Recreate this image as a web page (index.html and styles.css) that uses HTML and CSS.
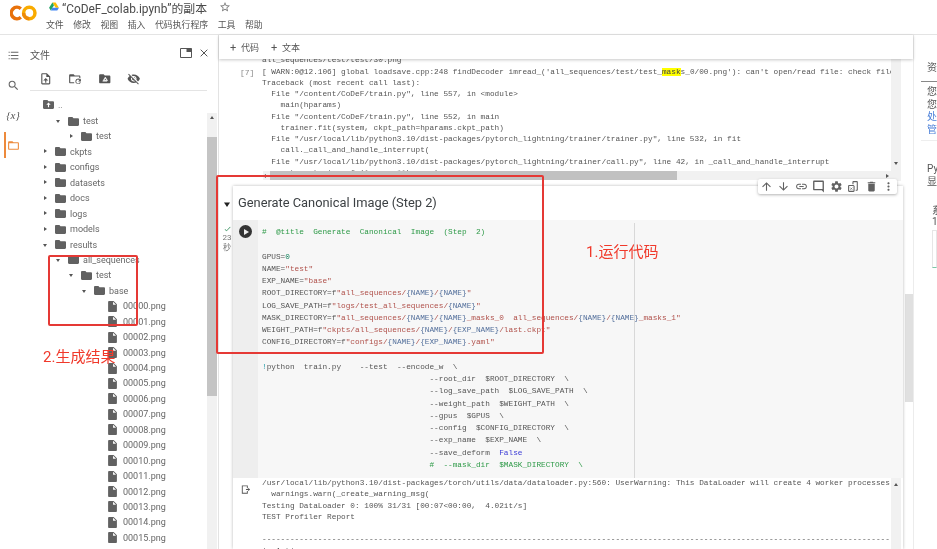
FILE: index.html
```html
<!DOCTYPE html>
<html lang="zh">
<head>
<meta charset="utf-8">
<title>CoDeF_colab.ipynb</title>
<link rel="stylesheet" href="styles.css">
</head>
<body>
<svg class="sprite" aria-hidden="true">
<symbol id="i-folder" viewBox="2 4 20 16"><path d="M10 4H4c-1.1 0-1.99.9-1.99 2L2 18c0 1.1.9 2 2 2h16c1.1 0 2-.9 2-2V8c0-1.1-.9-2-2-2h-8l-2-2z"/></symbol>
<symbol id="i-file" viewBox="4 2 16 20"><path d="M14 2H6c-1.1 0-1.99.9-1.99 2L4 20c0 1.1.89 2 1.99 2H18c1.1 0 2-.9 2-2V8l-6-6zm-1 7V3.5L18.5 9H13z"/></symbol>
</svg>
<div class="app">
  <header class="topbar">
    <svg class="logo" viewBox="0 0 28 16"><path d="M11.2 3.6A5.9 5.9 0 1 0 11.2 12.4" fill="none" stroke="#e8710a" stroke-width="3.6"/><circle cx="20" cy="8" r="5.9" fill="none" stroke="#f9ab00" stroke-width="3.6"/><path d="M14.1 8A5.9 5.9 0 0 0 20 13.9" fill="none" stroke="#ee8a08" stroke-width="3.6"/></svg>
    <div class="topbar-main">
      <div class="title-row">
        <svg class="drive" viewBox="0 0 24 22"><polygon points="8,1 16,1 24,14 16,14" fill="#fbbc04"/><polygon points="8,1 12,8 4,21 0,14" fill="#1fa463"/><polygon points="8,14 24,14 20,21 4,21" fill="#4285f4"/></svg>
        <span class="title">“CoDeF_colab.ipynb”的副本</span>
        <svg class="star" viewBox="0 0 24 24"><path d="M22 9.24l-7.19-.62L12 2 9.19 8.63 2 9.24l5.46 4.73L5.82 21 12 17.27 18.18 21l-1.63-7.03L22 9.24zM12 15.4l-3.76 2.27 1-4.28-3.32-2.88 4.38-.38L12 6.1l1.71 4.04 4.38.38-3.32 2.88 1 4.28L12 15.4z"/></svg>
      </div>
      <nav class="menu"><span>文件</span><span>修改</span><span>视图</span><span>插入</span><span>代码执行程序</span><span>工具</span><span>帮助</span></nav>
    </div>
  </header>
  <div class="workspace">
    <aside class="rail">
      <div class="rail-item"><svg class="ri" viewBox="0 0 24 24"><path d="M3 5h2v2H3zM7 5h14v2H7zM3 11h2v2H3zM7 11h14v2H7zM3 17h2v2H3zM7 17h14v2H7z"/></svg></div>
      <div class="rail-item"><svg class="ri" viewBox="0 0 24 24"><path d="M15.5 14h-.79l-.28-.27A6.471 6.471 0 0 0 16 9.5 6.5 6.5 0 1 0 9.5 16c1.61 0 3.09-.59 4.23-1.57l.27.28v.79l5 4.99L20.49 19l-4.99-5zm-6 0C7.01 14 5 11.99 5 9.5S7.01 5 9.5 5 14 7.01 14 9.5 11.99 14 9.5 14z"/></svg></div>
      <div class="rail-item"><span class="vars">{x}</span></div>
      <div class="rail-item active"><svg class="ri orange" viewBox="0 0 24 24"><path d="M20 6h-8l-2-2H4c-1.1 0-1.99.9-1.99 2L2 18c0 1.1.9 2 2 2h16c1.1 0 2-.9 2-2V8c0-1.1-.9-2-2-2zm0 12H4V8h16v10z"/></svg></div>
    </aside>
    <section class="files">
      <div class="files-head">
        <span class="files-title">文件</span>
        <svg class="win-ic" viewBox="0 0 24 20"><path d="M1 1h22v18H1z" fill="none" stroke="#555" stroke-width="2"/><path d="M13 1h10v7H13z" fill="#555"/></svg>
        <svg class="close-ic" viewBox="0 0 24 24"><path d="M4 4l16 16M20 4L4 20" stroke="#555" stroke-width="2.4"/></svg>
      </div>
      <div class="files-tools">
        <svg class="tool" viewBox="0 0 24 24"><path d="M14 2H6c-1.1 0-2 .9-2 2v16c0 1.1.9 2 2 2h12c1.1 0 2-.9 2-2V8l-6-6zm4 18H6V4h7v5h5v11z"/><path d="M12 10.500l-4.500 4.500H11v4h2v-4h3.500z"/></svg>
        <svg class="tool" viewBox="0 0 24 24"><path d="M4 4h6l2 2h8c1.100 0 2 .9 2 2v3h-2V8H4v10h7v2H4c-1.100 0-2-.9-2-2V6c0-1.100.9-2 2-2z"/><path d="M18 11.500a5 5 0 1 0 4.800 6.500h-1.900a3.200 3.200 0 1 1-.8-3.300L18 17h5v-5l-1.600 1.400A5 5 0 0 0 18 11.500z"/></svg>
        <svg class="tool" viewBox="0 0 24 24"><path d="M10 4H4c-1.100 0-2 .9-2 2v12c0 1.100.9 2 2 2h16c1.100 0 2-.9 2-2V8c0-1.100-.9-2-2-2h-8l-2-2z"/><path d="M13 9l4 6.500h-8z M8 16.500h8" fill="#fff" stroke="#fff"/><path d="M13 11.500l-1.500 2.800h3z"/></svg>
        <svg class="tool" viewBox="0 0 24 24"><path d="M12 7c2.760 0 5 2.240 5 5 0 .65-.13 1.260-.36 1.830l2.920 2.920c1.510-1.260 2.700-2.890 3.430-4.750-1.730-4.390-6-7.500-11-7.500-1.400 0-2.740.25-3.980.7l2.160 2.160C10.740 7.130 11.350 7 12 7zM2 4.270l2.280 2.280.46.46C3.080 8.300 1.780 10.020 1 12c1.730 4.390 6 7.500 11 7.500 1.550 0 3.030-.3 4.380-.84l.42.42L19.730 22 21 20.730 3.270 3 2 4.270zM7.530 9.800l1.550 1.550c-.05.21-.08.43-.08.65 0 1.660 1.340 3 3 3 .22 0 .44-.03.65-.08l1.550 1.550c-.67.33-1.410.53-2.200.53-2.760 0-5-2.240-5-5 0-.79.2-1.530.53-2.200zm4.310-.78l3.150 3.150.02-.16c0-1.660-1.340-3-3-3l-.17.01z"/></svg>
      </div>
      <div class="up-row">
        <svg class="up-folder" viewBox="2 4 20 16"><path d="M10 4H4c-1.100 0-2 .9-2 2v12c0 1.100.9 2 2 2h16c1.100 0 2-.9 2-2V8c0-1.100-.9-2-2-2h-8l-2-2z"/><path d="M12 8.500l-4 4h3V17h2v-4.500h3z" fill="#fff"/></svg>
        <span>..</span>
      </div>
      <div class="tree-wrap">
        <div class="tree">
          <div class="row d1"><i class="tw open"></i><svg class="fo"><use href="#i-folder"/></svg><span>test</span></div>
          <div class="row d2"><i class="tw"></i><svg class="fo"><use href="#i-folder"/></svg><span>test</span></div>
          <div class="row d0"><i class="tw"></i><svg class="fo"><use href="#i-folder"/></svg><span>ckpts</span></div>
          <div class="row d0"><i class="tw"></i><svg class="fo"><use href="#i-folder"/></svg><span>configs</span></div>
          <div class="row d0"><i class="tw"></i><svg class="fo"><use href="#i-folder"/></svg><span>datasets</span></div>
          <div class="row d0"><i class="tw"></i><svg class="fo"><use href="#i-folder"/></svg><span>docs</span></div>
          <div class="row d0"><i class="tw"></i><svg class="fo"><use href="#i-folder"/></svg><span>logs</span></div>
          <div class="row d0"><i class="tw"></i><svg class="fo"><use href="#i-folder"/></svg><span>models</span></div>
          <div class="row d0"><i class="tw open"></i><svg class="fo"><use href="#i-folder"/></svg><span>results</span></div>
          <div class="row d1"><i class="tw open"></i><svg class="fo"><use href="#i-folder"/></svg><span>all_sequences</span></div>
          <div class="row d2"><i class="tw open"></i><svg class="fo"><use href="#i-folder"/></svg><span>test</span></div>
          <div class="row d3"><i class="tw open"></i><svg class="fo"><use href="#i-folder"/></svg><span>base</span></div>
          <div class="row d4"><svg class="fi"><use href="#i-file"/></svg><span>00000.png</span></div>
          <div class="row d4"><svg class="fi"><use href="#i-file"/></svg><span>00001.png</span></div>
          <div class="row d4"><svg class="fi"><use href="#i-file"/></svg><span>00002.png</span></div>
          <div class="row d4"><svg class="fi"><use href="#i-file"/></svg><span>00003.png</span></div>
          <div class="row d4"><svg class="fi"><use href="#i-file"/></svg><span>00004.png</span></div>
          <div class="row d4"><svg class="fi"><use href="#i-file"/></svg><span>00005.png</span></div>
          <div class="row d4"><svg class="fi"><use href="#i-file"/></svg><span>00006.png</span></div>
          <div class="row d4"><svg class="fi"><use href="#i-file"/></svg><span>00007.png</span></div>
          <div class="row d4"><svg class="fi"><use href="#i-file"/></svg><span>00008.png</span></div>
          <div class="row d4"><svg class="fi"><use href="#i-file"/></svg><span>00009.png</span></div>
          <div class="row d4"><svg class="fi"><use href="#i-file"/></svg><span>00010.png</span></div>
          <div class="row d4"><svg class="fi"><use href="#i-file"/></svg><span>00011.png</span></div>
          <div class="row d4"><svg class="fi"><use href="#i-file"/></svg><span>00012.png</span></div>
          <div class="row d4"><svg class="fi"><use href="#i-file"/></svg><span>00013.png</span></div>
          <div class="row d4"><svg class="fi"><use href="#i-file"/></svg><span>00014.png</span></div>
          <div class="row d4"><svg class="fi"><use href="#i-file"/></svg><span>00015.png</span></div>
        </div>
        <div class="side-scroll"><i class="arrow-up"></i><div class="side-thumb"></div></div>
      </div>
    </section>
    <main class="notebook">
      <div class="nb-toolbar"><span class="add"><b>+</b>代码</span><span class="add"><b>+</b>文本</span></div>
      <div class="nb-body">
        <div class="cells">
          <div class="out-cell">
            <div class="prompt">[7]</div>
            <pre class="out-text first">all_sequences/test/test/30.png
[ WARN:0@12.106] global loadsave.cpp:248 findDecoder imread_('all_sequences/test/test_<mark>mask</mark>s_0/00.png'): can't open/read file: check file
Traceback (most recent call last):
  File "/content/CoDeF/train.py", line 557, in &lt;module&gt;
    main(hparams)
  File "/content/CoDeF/train.py", line 552, in main
    trainer.fit(system, ckpt_path=hparams.ckpt_path)
  File "/usr/local/lib/python3.10/dist-packages/pytorch_lightning/trainer/trainer.py", line 532, in fit
    call._call_and_handle_interrupt(
  File "/usr/local/lib/python3.10/dist-packages/pytorch_lightning/trainer/call.py", line 42, in _call_and_handle_interrupt
    return trainer_fn(*args, **kwargs)</pre>
            <div class="v-scroll"><i class="arrow-down"></i></div>
            <div class="h-scroll"><i class="arrow-left"></i><div class="h-thumb"></div><i class="arrow-right"></i></div>
          </div>
          <div class="cell-row">
            <div class="cell-side">
              <i class="tw open dark"></i>
              <div class="status"><svg class="check" viewBox="0 0 24 24"><path d="M9 16.200L4.800 12l-1.400 1.400L9 19 21 7l-1.400-1.400z"/></svg><span>23</span><span>秒</span></div>
            </div>
            <article class="cell">
              <div class="cell-tools">
                <svg class="ct" viewBox="0 0 24 24"><path d="M4 12l1.410 1.410L11 7.830V20h2V7.830l5.580 5.590L20 12l-8-8-8 8z"/></svg>
                <svg class="ct" viewBox="0 0 24 24"><path d="M20 12l-1.410-1.410L13 16.170V4h-2v12.170l-5.580-5.590L4 12l8 8 8-8z"/></svg>
                <svg class="ct" viewBox="0 0 24 24"><path d="M3.900 12c0-1.710 1.390-3.100 3.100-3.100h4V7H7c-2.760 0-5 2.240-5 5s2.240 5 5 5h4v-1.900H7c-1.710 0-3.100-1.390-3.100-3.100zM8 13h8v-2H8v2zm9-6h-4v1.900h4c1.710 0 3.100 1.390 3.100 3.100s-1.390 3.100-3.100 3.100h-4V17h4c2.760 0 5-2.240 5-5s-2.240-5-5-5z"/></svg>
                <svg class="ct" viewBox="0 0 24 24"><path d="M21.990 3c0-1.100-.89-2-1.990-2H4c-1.100 0-2 .9-2 2v14c0 1.100.9 2 2 2h14l4 4-.01-20zM19.500 3.500v13H4.500v-13h15z"/></svg>
                <svg class="ct" viewBox="0 0 24 24"><path d="M19.140 12.940c.04-.3.06-.61.06-.94 0-.32-.02-.64-.07-.94l2.030-1.580c.18-.14.23-.41.12-.61l-1.920-3.320c-.12-.22-.37-.29-.59-.22l-2.390.96c-.5-.38-1.030-.7-1.620-.94l-.36-2.540c-.04-.24-.24-.41-.48-.41h-3.840c-.24 0-.43.17-.47.41l-.36 2.540c-.59.24-1.130.57-1.620.94l-2.390-.96c-.22-.08-.47 0-.59.22L2.740 8.870c-.12.21-.08.47.12.61l2.030 1.580c-.05.3-.09.63-.09.94s.02.64.07.94l-2.030 1.580c-.18.14-.23.41-.12.61l1.920 3.320c.12.22.37.29.59.22l2.390-.96c.5.38 1.030.7 1.620.94l.36 2.540c.05.24.24.41.48.41h3.840c.24 0 .44-.17.47-.41l.36-2.540c.59-.24 1.130-.56 1.620-.94l2.390.96c.22.08.47 0 .59-.22l1.920-3.320c.12-.22.07-.47-.12-.61l-2.010-1.580zM12 15.600c-1.980 0-3.600-1.620-3.600-3.600s1.620-3.600 3.600-3.600 3.600 1.620 3.600 3.600-1.620 3.600-3.600 3.600z"/></svg>
                <svg class="ct" viewBox="0 0 24 24"><path d="M12 2h6c1.100 0 2 .9 2 2v14c0 1.100-.9 2-2 2h-2v-2h2V4h-6v4h-2V4c0-1.100.9-2 2-2zM4 9h8l2 2v9c0 1.100-.9 2-2 2H4c-1.100 0-2-.9-2-2v-9c0-1.100.9-2 2-2zm0 2v9h8v-9z"/><path d="M6 14l4 4M10 14l-4 4" stroke="#616161" stroke-width="1.200"/></svg>
                <svg class="ct" viewBox="0 0 24 24"><path d="M6 19c0 1.100.9 2 2 2h8c1.100 0 2-.9 2-2V7H6v12zM19 4h-3.500l-1-1h-5l-1 1H5v2h14V4z"/></svg>
                <svg class="ct" viewBox="0 0 24 24"><path d="M12 8c1.100 0 2-.9 2-2s-.9-2-2-2-2 .9-2 2 .9 2 2 2zm0 2c-1.100 0-2 .9-2 2s.9 2 2 2 2-.9 2-2-.9-2-2-2zm0 6c-1.100 0-2 .9-2 2s.9 2 2 2 2-.9 2-2-.9-2-2-2z"/></svg>
              </div>
              <h2 class="cell-title">Generate Canonical Image (Step 2)</h2>
              <div class="code-row">
                <div class="gutter"><span class="run"><i></i></span></div>
                <pre class="code"><span class="c">#  @title  Generate  Canonical  Image  (Step  2)</span>

GPUS=<span class="m">0</span>
NAME=<span class="s">"test"</span>
EXP_NAME=<span class="s">"base"</span>
ROOT_DIRECTORY=f<span class="s">"all_sequences/</span><span class="n">{NAME}</span><span class="s">/</span><span class="n">{NAME}</span><span class="s">"</span>
LOG_SAVE_PATH=f<span class="s">"logs/test_all_sequences/</span><span class="n">{NAME}</span><span class="s">"</span>
MASK_DIRECTORY=f<span class="s">"all_sequences/</span><span class="n">{NAME}</span><span class="s">/</span><span class="n">{NAME}</span><span class="s">_masks_0  all_sequences/</span><span class="n">{NAME}</span><span class="s">/</span><span class="n">{NAME}</span><span class="s">_masks_1"</span>
WEIGHT_PATH=f<span class="s">"ckpts/all_sequences/</span><span class="n">{NAME}</span><span class="s">/</span><span class="n">{EXP_NAME}</span><span class="s">/last.ckpt"</span>
CONFIG_DIRECTORY=f<span class="s">"configs/</span><span class="n">{NAME}</span><span class="s">/</span><span class="n">{EXP_NAME}</span><span class="s">.yaml"</span>

<span class="b">!</span>python  train.py    --test  --encode_w  \
                                    --root_dir  $ROOT_DIRECTORY  \
                                    --log_save_path  $LOG_SAVE_PATH  \
                                    --weight_path  $WEIGHT_PATH  \
                                    --gpus  $GPUS  \
                                    --config  $CONFIG_DIRECTORY  \
                                    --exp_name  $EXP_NAME  \
                                    --save_deform  <span class="k">False</span>
                                    <span class="c">#  --mask_dir  $MASK_DIRECTORY  \</span></pre>
                <div class="ruler"></div>
              </div>
              <div class="out-row">
                <div class="out-gutter"><svg class="out-ic" viewBox="0 0 24 24"><path d="M4 3h13v6h-2V5H6v14h9v-4h2v6H4z"/><path d="M13 11h5V8l4 4-4 4v-3h-5z"/></svg></div>
                <pre class="out-text">/usr/local/lib/python3.10/dist-packages/torch/utils/data/dataloader.py:560: UserWarning: This DataLoader will create 4 worker processes in total.
  warnings.warn(_create_warning_msg(
Testing DataLoader 0: 100% 31/31 [00:07&lt;00:00,  4.02it/s]
TEST Profiler Report

------------------------------------------------------------------------------------------------------------------------------------------------------
|  Action</pre>
                <div class="v-scroll"><i class="arrow-up"></i></div>
              </div>
            </article>
          </div>
        </div>
        <div class="page-scroll"><div class="page-thumb"></div></div>
      </div>
    </main>
    <aside class="resources">
      <div class="res-tab">资</div>
      <div class="res-info"><p>您</p><p>您</p><p class="lnk">处</p><p class="lnk">管</p></div>
      <div class="res-sec"><p>Py</p><p>显</p></div>
      <div class="res-sys"><p>系</p><p>1</p><div class="res-box"></div></div>
    </aside>
  </div>
  <div class="mark-box box-run"></div>
  <div class="mark-box box-result"></div>
  <div class="mark-text text-run">1.运行代码</div>
  <div class="mark-text text-result">2.生成结果</div>
</div>
</body>
</html>
```
FILE: styles.css
```css
* { box-sizing: border-box; }
html, body { margin: 0; height: 100%; background: #fff; }
body { overflow: hidden; font-family: Roboto, "Noto Sans CJK SC", sans-serif; color: #5f6368; }
p, h2, pre { margin: 0; }
i { display: block; font-style: normal; }
.sprite { display: none; }

.app { position: relative; width: 937px; height: 549px; display: flex; flex-direction: column; overflow: hidden; filter: blur(.35px); }

/* header */
.topbar { height: 35px; flex: none; display: flex; border-bottom: 1px solid #e4e4e4; padding-left: 10px; }
.logo { width: 27px; height: 16px; margin-top: 5px; flex: none; }
.topbar-main { margin-left: 9px; display: flex; flex-direction: column; }
.title-row { height: 17px; display: flex; align-items: center; padding-left: 3px; }
.drive { width: 10px; height: 9px; margin-top: -4px; }
.title { margin-left: 3px; font-size: 11.9px; color: #4a4a4a; line-height: 16px; width: 146px; white-space: nowrap; }
.star { width: 12px; height: 12px; margin: -3px 0 0 11px; fill: #777; }
.menu { display: flex; gap: 9.5px; font-size: 8.9px; line-height: 12px; margin-top: 2px; color: #555; }

.workspace { flex: 1; min-height: 0; display: flex; }

/* left rail */
.rail { width: 30px; flex: none; padding-top: 5px; display: flex; flex-direction: column; }
.rail-item { width: 26px; height: 30px; display: flex; align-items: center; justify-content: center; }
.rail-item.active { height: 26px; margin: 2px 0 0 4px; width: 22px; border-left: 2px solid #ed8a3c; justify-content: flex-start; padding-left: 1px; }
.ri { width: 13px; height: 13px; fill: #666; }
.ri.orange { fill: #ed8a3c; }
.vars { font: italic 11px "Liberation Serif", serif; color: #555; }

/* files panel */
.files { width: 189px; flex: none; border-right: 1px solid #e3e3e3; display: flex; flex-direction: column; min-height: 0; }
.files-head { height: 32px; flex: none; display: flex; align-items: center; padding-top: 7px; }
.files-title { font-size: 10px; color: #555; width: 150px; }
.win-ic { width: 12px; height: 10px; margin-top: -4px; }
.close-ic { width: 10px; height: 10px; margin: -4px 0 0 7px; }
.files-tools { height: 24px; flex: none; width: 177px; display: flex; align-items: center; gap: 16px; padding-left: 8.500px; border-bottom: 1px solid #e4e4e4; }
.tool { width: 13.500px; height: 13.500px; flex: none; fill: #555; }
.up-row { height: 17px; flex: none; display: flex; align-items: center; padding-left: 13px; margin-top: 5px; font-size: 9px; color: #777; }
.up-folder { width: 11px; height: 9px; margin-right: 4px; fill: #616161; }
.tree-wrap { flex: 1; min-height: 0; display: flex; margin-top: .3px; }
.tree { width: 177px; flex: none; overflow: hidden; }
.row { height: 15.45px; display: flex; align-items: center; font-size: 9px; color: #666; white-space: nowrap; }
.row.d0 { padding-left: 11px; }
.row.d1 { padding-left: 24px; }
.row.d2 { padding-left: 37px; }
.row.d3 { padding-left: 50px; }
.row.d4 { padding-left: 78px; }
.tw { width: 8px; height: 8px; flex: none; position: relative; }
.tw::after { content: ""; position: absolute; left: 3px; top: 1.500px; border-left: 3px solid #555; border-top: 2.500px solid transparent; border-bottom: 2.500px solid transparent; }
.tw.open::after { left: 1.500px; top: 3px; border-top: 3px solid #555; border-left: 2.500px solid transparent; border-right: 2.500px solid transparent; border-bottom: 0; }
.fo { width: 11px; height: 9px; margin: 0 4px 0 6px; fill: #616161; flex: none; }
.fi { width: 9px; height: 11px; margin-right: 6px; fill: #616161; flex: none; }
.side-scroll { width: 10px; flex: none; background: #f1f1f1; padding-top: 3px; }
.side-thumb { height: 259px; margin-top: 18px; background: #c4c4c4; }
.arrow-up, .arrow-down, .arrow-left, .arrow-right { width: 0; height: 0; }
.arrow-up { margin: 0 auto; border-left: 2.500px solid transparent; border-right: 2.500px solid transparent; border-bottom: 3px solid #555; }
.arrow-down { margin: 0 auto; border-left: 2.500px solid transparent; border-right: 2.500px solid transparent; border-top: 3px solid #555; }
.arrow-left { border-top: 2.500px solid transparent; border-bottom: 2.500px solid transparent; border-right: 3px solid #555; }
.arrow-right { border-top: 2.500px solid transparent; border-bottom: 2.500px solid transparent; border-left: 3px solid #555; }

/* notebook */
.notebook { width: 694px; flex: none; display: flex; flex-direction: column; }
.nb-toolbar { height: 24px; flex: none; display: flex; gap: 12px; padding-left: 11px; align-items: center; box-shadow: 0 1px 3px rgba(0,0,0,.22); position: relative; z-index: 2; background: #fff; }
.add { width: 29px; display: flex; justify-content: space-between; align-items: center; font-size: 9px; color: #555; }
.add b { font-weight: 400; font-size: 11px; }
.nb-body { flex: 1; min-height: 0; display: flex; }
.cells { width: 686px; flex: none; display: flex; flex-direction: column; }
.page-scroll { width: 8px; flex: none; padding-top: 235px; }
.page-thumb { height: 108px; background: #e0e0e0; }

.out-text { font: 7.75px/11.25px "Liberation Mono", monospace; color: #555; white-space: pre; overflow: hidden; width: 629px; flex: none; }
.out-text.first { margin-top: -3.600px; height: 125.600px; }
.out-text mark { background: #ff0; color: #444; }
.out-cell { height: 122px; flex: none; display: flex; position: relative; overflow: hidden; }
.prompt { width: 43px; flex: none; padding: 8px 0 0 21px; font: 8px/11px "Liberation Mono", monospace; color: #8a8a8a; }
.v-scroll { width: 10px; flex: none; background: #f1f1f1; padding-top: 5px; }
.out-cell .v-scroll { padding-top: 103px; }
.h-scroll { position: absolute; left: 44px; width: 638px; top: 112px; height: 9px; background: #f1f1f1; display: flex; align-items: center; padding: 0 12px 0 0; z-index: 1; }
.h-thumb { width: 407px; height: 9px; margin-left: 4px; background: #c1c1c1; }
.arrow-right { margin-left: auto; }

.cell-row { flex: 1; min-height: 0; display: flex; margin-top: 5px; }
.cell-side { width: 14px; flex: none; padding-top: 14px; }
.cell-side .tw { margin-left: 4px; width: 8px; height: 8px; transform: scale(1.500); }
.tw.dark::after { border-top-color: #222; }
.status { margin-top: 17px; display: flex; flex-direction: column; align-items: center; font-size: 8px; line-height: 9.500px; color: #777; padding-left: 2px; }
.check { width: 9px; height: 8px; fill: #2e8b57; }
.cell { width: 670px; flex: none; position: relative; box-shadow: 0 0 3px rgba(0,0,0,.28); display: flex; flex-direction: column; }
.cell-tools { position: absolute; top: -7px; right: 6px; width: 139px; height: 15px; background: #fff; box-shadow: 0 1px 3px rgba(0,0,0,.3); border-radius: 2px; z-index: 3; display: flex; align-items: center; justify-content: space-between; padding: 0 2px; }
.ct { width: 13px; height: 13px; fill: #616161; }
.cell-title { height: 34px; flex: none; font-size: 12.85px; font-weight: 400; line-height: 34px; padding-left: 5px; color: #3c4043; }
.code-row { height: 258px; flex: none; display: flex; position: relative; background: #f7f7f7; }
.gutter { width: 25px; flex: none; background: #eee; padding: 5px 0 0 6px; }
.run { width: 13px; height: 13px; display: flex; align-items: center; justify-content: center; border-radius: 50%; background: #333; }
.run i { margin-left: 1.500px; border-left: 5px solid #eee; border-top: 3px solid transparent; border-bottom: 3px solid transparent; }
.code { padding: 6px 0 0 4px; font: 7.75px/12.25px "Liberation Mono", monospace; color: #555; white-space: pre; overflow: hidden; }
.code .c { color: #2e9a48; }
.code .s { color: #b0504a; }
.code .n { color: #54709c; }
.code .m { color: #11805a; }
.code .k { color: #3a3ad6; }
.code .b { color: #1f9aa8; }
.ruler { position: absolute; left: 401px; top: 3px; bottom: 0; width: 1px; background: #d8d8d8; }
.out-row { flex: 1; min-height: 0; display: flex; background: #fff; overflow: hidden; }
.out-gutter { width: 25px; flex: none; padding: 6px 0 0 7px; }
.out-ic { width: 11px; height: 11px; fill: #555; display: block; }
.out-row .out-text { width: 633px; padding-left: 4px; }

/* resources */
.resources { flex: 1; min-width: 0; border-left: 1px solid #ececec; overflow: hidden; font-size: 10px; color: #555; line-height: 12.7px; padding-left: 7px; }
.res-tab { height: 24px; margin-top: 23px; padding: 4px 0 0 6px; border-bottom: 1.500px solid #888; }
.res-info { padding: 4px 0 3px 6px; border-bottom: 1px solid #eee; }
.lnk { color: #4a7fd8; }
.res-sec { padding: 22px 0 0 6px; }
.res-sys { padding: 17px 0 0 11px; }
.res-sys p { line-height: 11px; }
.res-box { height: 38px; margin-top: 3px; border: 1px solid #e6e6e6; border-bottom: 1px solid #7cc8a8; }

/* annotations */
.mark-box { position: absolute; border: 2px solid #e53935; border-radius: 2px; z-index: 5; }
.box-run { left: 216px; top: 175px; width: 328px; height: 179px; }
.box-result { left: 48px; top: 255px; width: 90px; height: 71px; }
.mark-text { position: absolute; z-index: 5; font-size: 15px; line-height: 20px; color: #f0392b; white-space: nowrap; }
.text-run { left: 586px; top: 242px; }
.text-result { left: 43px; top: 347px; }
```
